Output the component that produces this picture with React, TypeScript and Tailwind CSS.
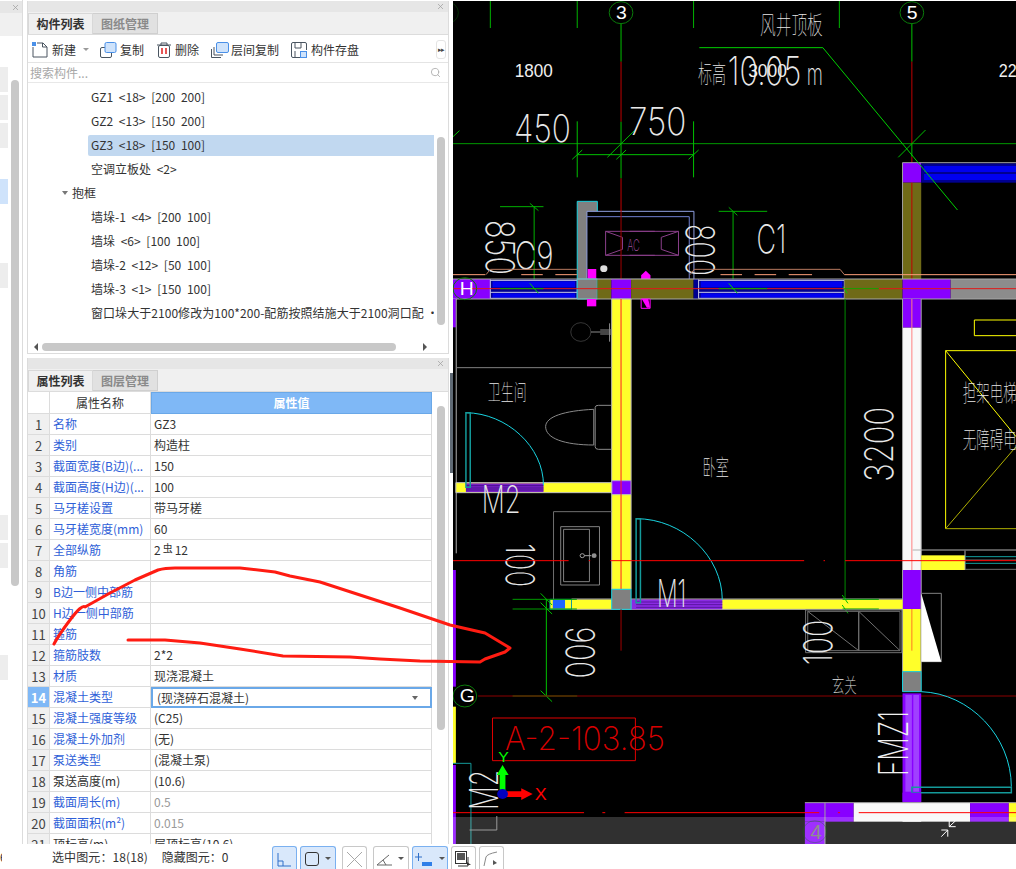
import React from "react";
import { Search, X } from "lucide-react";

const treeRows = [
  { text: "GZ1 <18> [200 200]" },
  { text: "GZ2 <13> [150 200]" },
  { text: "GZ3 <18> [150 100]", active: true },
  { text: "空调立板处 <2>" },
  { text: "抱框", group: true },
  { text: "墙垛-1 <4> [200 100]" },
  { text: "墙垛 <6> [100 100]" },
  { text: "墙垛-2 <12> [50 100]" },
  { text: "墙垛-3 <1> [150 100]" },
  { text: "窗口垛大于2100修改为100*200-配筋按照结施大于2100洞口配 ·", long: true },
];

const propRows: { name: string; value: React.ReactNode; plain?: boolean; dim?: boolean; active?: boolean }[] = [
  { name: "名称", value: "GZ3" },
  { name: "类别", value: "构造柱" },
  { name: "截面宽度(B边)(...", value: "150" },
  { name: "截面高度(H边)(...", value: "100" },
  { name: "马牙槎设置", value: "带马牙槎" },
  { name: "马牙槎宽度(mm)", value: "60" },
  { name: "全部纵筋", value: <>2<span className="text-[10px] relative -top-[2px] mx-[2px]">虫</span>12</> },
  { name: "角筋", value: "" },
  { name: "B边一侧中部筋", value: "" },
  { name: "H边一侧中部筋", value: "" },
  { name: "箍筋", value: "" },
  { name: "箍筋肢数", value: "2*2" },
  { name: "材质", value: "现浇混凝土" },
  { name: "混凝土类型", value: "(现浇碎石混凝土)", active: true },
  { name: "混凝土强度等级", value: "(C25)" },
  { name: "混凝土外加剂", value: "(无)" },
  { name: "泵送类型", value: "(混凝土泵)" },
  { name: "泵送高度(m)", value: "(10.6)", plain: true },
  { name: "截面周长(m)", value: "0.5", dim: true },
  { name: "截面面积(m²)", value: "0.015", dim: true },
  { name: "顶标高(m)", value: "层顶标高(10.6)", plain: true },
];

// canvas units: 1 page px = 2.785 x 3 units, strokes stay 1px
const Ln = ({ d, c, w = 1 }: { d: string; c: string; w?: number }) => (
  <path d={d} fill="none" stroke={c} strokeWidth={w} vectorEffect="non-scaling-stroke" />
);

const Box = ({ x, y, w, h, c, line }: { x: number; y: number; w: number; h: number; c: string; line?: string }) => (
  <rect x={x} y={y} width={w} height={h} fill={c} stroke={line ?? "none"} vectorEffect="non-scaling-stroke" />
);

const Txt = ({
  x, y, s, len, c = "#e8e8e8", rot, thin = true, children,
}: {
  x: number; y: number; s: number; len?: number; c?: string; rot?: number; thin?: boolean; children: React.ReactNode;
}) => (
  <text
    x={x}
    y={y}
    fontSize={s}
    fill={c}
    fontWeight={thin ? 150 : 400}
    fontFamily={thin ? "Inter, 'Noto Sans CJK SC', sans-serif" : "'Liberation Sans', sans-serif"}
    textLength={len}
    lengthAdjust="spacingAndGlyphs"
    transform={rot ? `rotate(${rot} ${x} ${y})` : undefined}
  >
    {children}
  </text>
);

const AxisMark = ({ x, y, label, c = "#fff", line = "#0a7a0a" }: { x: number; y: number; label: string; c?: string; line?: string }) => (
  <>
    <ellipse cx={x} cy={y} rx={33} ry={33} fill="none" stroke={line} vectorEffect="non-scaling-stroke" />
    <Txt x={x - 14} y={y + 19} s={54} c={c} thin={false}>{label}</Txt>
  </>
);

const WindowBand = ({ x, w }: { x: number; w: number }) => (
  <>
    <Box x={x} y={838} w={w} h={58} c="#000090" />
    <Box x={x + 6} y={844} w={w - 12} h={18} c="#0000f0" />
    <Box x={x + 6} y={880} w={w - 12} h={13} c="#0000f0" />
    <Ln d={`M${x} 841H${x + w}M${x} 877H${x + w}M${x} 895H${x + w}M${x} 838V896M${x + w} 838V896`} c="#c8c8e8" />
  </>
);

function CadCanvas() {
  return (
    <svg viewBox="0 3 1568 2529" preserveAspectRatio="none" className="block w-[563px] h-[843px] shrink-0 bg-black">
      {/* grid ticks and axis */}
      <Ln d="M104 0V84M346 0V84M670 0V84M1076 0V84" c="#00b400" />
      <Ln d="M0 431H1568" c="#009a00" />
      <Ln d="M468 70V185M468 365V535M1278 70V185M1278 430V470" c="#00c000" />
      <Ln d="M468 185V365M468 535V840M1278 185V430M1278 470V840" c="#c00000" />
      <Ln d="M346 464H670M346 364V532M670 364V532M332 478L360 450M430 472L505 392M455 478L482 450M656 478L684 450M1240 472L1316 390M0 410L18 392" c="#00c000" />
      <AxisMark x={468} y={38} label="3" />
      <AxisMark x={1278} y={38} label="5" />
      <ellipse cx={-18} cy={38} rx={33} ry={33} fill="none" stroke="#0a7a0a" />

      <Txt x={855} y={103} s={75} len={175}>风井顶板</Txt>
      <Txt x={172} y={232} s={54} len={106} c="#f0f0f0" thin={false}>1800</Txt>
      <Txt x={682} y={250} s={74} len={78}>标高</Txt>
      <Txt x={765} y={255} s={118} len={205}>10.05</Txt>
      <Txt x={985} y={255} s={90} len={45}>m</Txt>
      <Txt x={822} y={232} s={54} len={108} c="#f0f0f0" thin={false}>3000</Txt>
      <Txt x={1520} y={232} s={54} len={50} c="#f0f0f0" thin={false}>22</Txt>
      <Txt x={170} y={427} s={115} len={158}>450</Txt>
      <Txt x={490} y={405} s={115} len={160}>750</Txt>

      {/* top right wall */}
      <Box x={1252} y={488} w={52} h={60} c="#8800ff" />
      <Box x={1252} y={548} w={52} h={290} c="#6f6a17" />
      <Box x={1304} y={490} w={264} h={58} c="#000090" />
      <Box x={1312} y={498} w={256} h={18} c="#0000f0" />
      <Box x={1312} y={522} w={256} h={18} c="#0000f0" />
      <Ln d="M1252 838V488H1568" c="#a0a0a0" />
      <Ln d="M1278 548V838" c="#c00000" />
      <Ln d="M1030 143L1405 630M686 143H1030" c="#00d000" />

      {/* AC unit */}
      <Box x={346} y={604} w={56} h={234} c="#808080" line="#19d3e0" />
      <Box x={373} y={634} w={298} h={204} c="#000" line="#8f9fe0" />
      <Ln d="M373 650H658V838" c="#6f7fd0" />
      <Ln d="M425 694H628V766H425ZM425 694L472 712V748L425 766M628 694L580 712V748L628 766M492 694H562M492 766H562" c="#8a3f8a" />
      <Ln d="M468 630V838" c="#a00000" />
      <Txt x={485} y={752} s={48} len={35} c="#a050a0">AC</Txt>
      <circle cx={420} cy={806} r={10} fill="#ddd" />
      <Box x={375} y={807} w={24} h={32} c="#ff00ff" />
      <polygon points="524,826 537,812 550,826 550,897 524,897" fill="#ff00ff" />

      {/* dims near windows */}
      <Ln d="M131 620H252M226 620V866M214 610L238 632M740 634H875M780 634V866M768 622L792 646" c="#00b000" />
      <Txt x={92} y={660} s={110} len={165} rot={90}>850</Txt>
      <Txt x={172} y={808} s={115} len={108}>C9</Txt>
      <Txt x={648} y={672} s={110} len={156} rot={90}>800</Txt>
      <Txt x={845} y={760} s={118} len={83}>C1</Txt>
      <Ln d="M92 824L104 808H346M660 824L672 808H1078L1090 824" c="#b87a60" />
      <Ln d="M0 824H90M190 824H250M285 824H345M745 824H805M840 824H900M935 824H1000M1090 824H1568" c="#ff9f7a" />

      {/* main wall H */}
      <Box x={0} y={837} w={104} h={60} c="#8800ff" />
      <WindowBand x={104} w={242} />
      <Box x={346} y={837} w={56} h={60} c="#808080" line="#19d3e0" />
      <Box x={402} y={837} w={39} h={60} c="#6f6a17" />
      <Box x={441} y={837} w={55} h={60} c="#8800ff" />
      <Box x={496} y={837} w={174} h={60} c="#6f6a17" />
      <Box x={670} y={837} w={14} h={60} c="#000090" />
      <WindowBand x={684} w={406} />
      <Box x={1090} y={837} w={162} h={60} c="#6f6a17" />
      <Box x={1252} y={837} w={134} h={60} c="#8800ff" />
      <Box x={1386} y={837} w={182} h={60} c="#8c8c8c" />
      <Ln d="M0 897H1568M0 837H1568" c="#a8a8a8" />
      <Ln d="M0 866H1568" c="#e01818" />
      <Ln d="M131 866H252M740 866H875M1092 866H1186" c="#00b000" />
      <Ln d="M214 850L238 880M768 850L792 880M1086 860L1098 880" c="#00d000" />
      <AxisMark x={33} y={866} label="H" />
      <Box x={524} y={897} w={25} h={28} c="#000" line="#ff00ff" />
      <polygon points="526,897 544,897 549,923 540,923" fill="#ff00ff" />
      <Box x={373} y={897} w={26} h={22} c="#ff00ff" />

      {/* rooms */}
      <Box x={0} y={897} w={8} h={85} c="#8800ff" />
      <Ln d="M9 897V1660" c="#b0b0b0" />
      <Box x={442} y={897} w={54} h={545} c="#ffff2a" line="#b8b8b8" />
      <Box x={442} y={1442} w={54} h={42} c="#8800ff" line="#b8b8b8" />
      <Box x={442} y={1484} w={54} h={284} c="#ffff2a" line="#b8b8b8" />
      <Ln d="M468 897V1768" c="#ff2020" />
      <Ln d="M10 1103H441" c="#808080" />
      <Box x={8} y={1448} w={434} h={30} c="#ffff2a" line="#c0c0c0" />
      <Box x={36} y={1450} w={216} h={26} c="#7a20c8" />
      <Ln d="M36 1457H252M36 1464H252M36 1470H252" c="#4a1090" />
      <circle cx={356} cy={996} r={28} fill="none" stroke="#9a9a9a" />
      <Ln d="M384 996H441M410 990H441M410 1002H441M436 970V1025" c="#8a8a8a" />
      <Ln d="M392 1228C310 1232 258 1250 258 1280C258 1315 310 1335 392 1335ZM396 1222Q396 1216 405 1216H440M440 1348H405Q396 1348 396 1340V1222" c="#8a8a8a" />
      <Txt x={97} y={1200} s={66} len={108}>卫生间</Txt>
      <Ln d="M36 1238C150 1240 252 1340 252 1456" c="#19d3e0" />
      <path d="M36 1238H48V1462H36Z" fill="none" stroke="#149a9a" strokeWidth={1.5} vectorEffect="non-scaling-stroke" />
      <Txt x={80} y={1540} s={115} len={108}>M2</Txt>
      <Txt x={695} y={1425} s={66} len={73}>卧室</Txt>
      <Ln d="M1092 897V1800" c="#008a00" />
      <Txt x={1225} y={1445} s={110} len={225} rot={-90}>3200</Txt>

      {/* right column */}
      <Box x={1252} y={897} w={52} h={86} c="#8800ff" />
      <Box x={1252} y={983} w={52} h={727} c="#f8f8f8" />
      <Box x={1252} y={1710} w={52} h={117} c="#8800ff" />
      <Box x={1252} y={1827} w={52} h={188} c="#ffff2a" />
      <Ln d="M1278 897V1710" c="#ff8080" />
      <Ln d="M1278 1827V1952" c="#ff7a20" />
      <Ln d="M1252 897V2015M1304 897V2015" c="#a0a0a0" />
      <Box x={1452} y={960} w={130} h={47} c="none" line="#ffff00" />
      <Ln d="M1372 1052H1568M1372 1052V1586M1372 1052L1568 1310" c="#ffff00" />
      <Ln d="M1372 1586H1568M1372 1586L1568 1340" c="#b0b000" />
      <Txt x={1420} y={1202} s={68} len={150}>担架电梯</Txt>
      <Txt x={1420} y={1345} s={68} len={150}>无障碍电</Txt>
      <Box x={1304} y={1666} w={122} h={44} c="#ffff2a" />
      <Ln d="M1280 1650H1568M1426 1652V1710" c="#b0b0b0" />
      <Ln d="M1426 1670H1568M1426 1690H1568" c="#14a0a0" />
      <Ln d="M1426 1680H1568M1426 1708H1568" c="#707070" />

      {/* wash basin */}
      <Ln d="M280 1798V1535H441" c="#707070" />
      <Box x={300} y={1580} w={108} h={175} c="none" line="#808080" />
      <Box x={308} y={1588} w={72} h={157} c="none" line="#808080" />
      <circle cx={360} cy={1667} r={6} fill="none" stroke="#a0a0a0" vectorEffect="non-scaling-stroke" />
      <Ln d="M366 1667H385" c="#a0a0a0" />
      <circle cx={393} cy={1667} r={7} fill="#909090" />
      <Txt x={148} y={1630} s={110} len={132} rot={90}>100</Txt>

      {/* door M1 and lower walls */}
      <Box x={330} y={1798} w={922} h={30} c="#ffff2a" />
      <Ln d="M330 1797H1252M330 1828H1252" c="#b0b0b0" />
      <Box x={270} y={1798} w={60} h={30} c="#ffff2a" line="#149a9a" />
      <Box x={278} y={1800} w={34} h={26} c="#1e64ff" />
      <Box x={496} y={1798} w={254} h={30} c="#8a2be2" />
      <Ln d="M510 1806H750M510 1814H750M510 1822H750" c="#5a15a0" />
      <Box x={442} y={1768} w={54} h={60} c="#808080" line="#19d3e0" />
      <Ln d="M510 1556C640 1556 750 1670 750 1800" c="#19d3e0" />
      <path d="M510 1556H522V1808H510Z" fill="none" stroke="#149a9a" strokeWidth={1.5} vectorEffect="non-scaling-stroke" />
      <Txt x={568} y={1822} s={115} len={82}>M1</Txt>
      <Ln d="M166 1798H345M166 1827H345" c="#009a00" />
      <Ln d="M1085 1798H1186M1085 1827H1186" c="#009a00" />
      <Ln d="M260 1798V2088M244 1780L276 1815M244 1808L276 1842M244 2072L276 2105M1084 1785L1100 1810M1084 1815L1100 1840" c="#00c000" />
      <Ln d="M166 2088H346" c="#00a000" />
      <Ln d="M468 1828V1952" c="#a00000" />
      <Txt x={316} y={1880} s={110} len={155} rot={90}>900</Txt>
      <Ln d="M0 1682H322M378 1682H382M438 1682H978M1032 1682H1036M1092 1682H1568" c="#ff0000" />

      {/* closet */}
      <Ln d="M982 1830H1250V1958H982ZM988 1834H1130V1952H988ZM1130 1834H1245V1952H1130ZM988 1834L1130 1952M1130 1834L1245 1952" c="#707070" />
      <Txt x={1055} y={1995} s={110} len={135} rot={-90}>100</Txt>
      <Box x={1304} y={1780} w={56} h={205} c="#000" line="#808080" />
      <polygon points="1304,1780 1360,1985 1304,1985" fill="#fff" />
      <Box x={1252} y={2015} w={52} h={60} c="#808080" line="#19d3e0" />
      <Txt x={1055} y={2080} s={62} len={70}>玄关</Txt>

      {/* axis G */}
      <Ln d="M70 2088H1568" c="#8b0000" />
      <AxisMark x={33} y={2088} label="G" />
      <Box x={0} y={1710} w={8} h={350} c="#8800ff" />
      <Box x={0} y={2120} w={8} h={170} c="#ffff2a" />
      <Box x={0} y={2295} w={8} h={237} c="#8800ff" />

      <Box x={110} y={2154} w={398} h={128} c="none" line="#e00000" />
      <Txt x={145} y={2250} s={98} len={445} c="#d80000">A-2-103.85</Txt>

      {/* door FM */}
      <Box x={1252} y={2080} w={52} h={325} c="#8800ff" />
      <Box x={1260} y={2085} w={18} h={290} c="#a040ff" />
      <Box x={1282} y={2085} w={16} h={290} c="#a040ff" />
      <Ln d="M1304 2075C1440 2080 1555 2210 1555 2360" c="#19d3e0" />
      <path d="M1278 2362H1555V2378H1278Z" fill="none" stroke="#149a9a" strokeWidth={1.5} vectorEffect="non-scaling-stroke" />
      <Txt x={1268} y={2328} s={112} len={195} rot={-90} c="#f0f0f0">FMZ1</Txt>

      {/* bottom wall */}
      <Box x={980} y={2408} w={136} h={57} c="#8800ff" />
      <Box x={980} y={2465} w={56} h={67} c="#8800ff" />
      <Box x={1116} y={2408} w={324} h={57} c="#f8f8f8" />
      <Box x={1440} y={2408} w={108} h={57} c="#8800ff" />
      <Box x={1548} y={2408} w={20} h={57} c="#ffff2a" />
      <Box x={1252} y={2378} w={52} h={30} c="#8800ff" />
      <Box x={1252} y={2408} w={52} h={57} c="#f8f8f8" />
      <Ln d="M980 2408H1568M1036 2408V2532" c="#a0a0a0" />
      <Ln d="M0 2438H365M416 2438H424M478 2438H1020M1072 2438H1078M1130 2438H1568" c="#ff0000" />

      <Ln d="M0 2290H50V2532" c="#149a9a" />
      <Txt x={125} y={2430} s={110} len={120} rot={-90}>M2</Txt>

      {/* dimmed strip */}
      <rect x={0} y={2451} width={1568} height={81} fill="#fff" fillOpacity={0.19} />
      <Ln d="M122 2448V2490H46" c="#9a9a9a" />
      <ellipse cx={1008} cy={2495} rx={33} ry={33} fill="none" stroke="#0a7a0a" />
      <Txt x={995} y={2516} s={58} c="#8f8f8f" thin={false}>4</Txt>
      <Ln d="M1382 2462V2480H1400M1382 2480L1400 2462M1378 2510V2490H1360M1378 2490L1360 2510" c="#ffffff" />

      {/* origin marker */}
      <polygon points="130,2382 130,2325 122,2325 138,2295 155,2325 146,2325 146,2382" fill="#00ff00" />
      <polygon points="138,2374 190,2374 190,2365 222,2382 190,2400 190,2391 138,2391" fill="#ff0000" />
      <circle cx={138} cy={2382} r={15} fill="#0000c0" />
      <Txt x={126} y={2285} s={44} c="#00ff00" thin={false}>Y</Txt>
      <Txt x={228} y={2400} s={50} c="#ff0000" thin={false}>X</Txt>
    </svg>
  );
}

function LeftStrip() {
  return (
    <div className="w-[27px] shrink-0 flex">
      <div className="w-[23px] border-r border-[#dcdcdc] flex flex-col">
        <div className="h-[12px] mt-px bg-[#e6e6e6] flex items-center justify-end pr-[2px]">
          <X size={9} className="text-[#a0a0a0]" />
        </div>
        <div className="h-[23px] bg-[#f0f0f0]"></div>
        <div className="flex-1 bg-white flex">
          <div className="w-[8px] flex flex-col">
            <div className="h-[25px] mt-[31px] bg-[#ededed]"></div>
            <div className="h-[25px] mt-[3px] bg-[#ededed]"></div>
            <div className="h-[25px] mt-[3px] bg-[#ededed]"></div>
            <div className="h-[25px] mt-[31px] bg-[#cfe3fb]"></div>
            <div className="h-[25px] mt-[59px] bg-[#ededed]"></div>
            <div className="h-[25px] mt-[227px] bg-[#ededed]"></div>
            <div className="h-[25px] mt-[3px] bg-[#ededed]"></div>
            <div className="h-[25px] mt-[87px] bg-[#ededed]"></div>
          </div>
          <div className="w-[8px] ml-[3px] h-[506px] mt-[44px] rounded-full bg-[#c8c8c8]"></div>
        </div>
      </div>
    </div>
  );
}

function PanelHead() {
  return (
    <div className="h-[11px] bg-[#e6e6e6] flex items-center justify-end pr-[3px] shrink-0">
      <X size={9} className="text-[#a0a0a0]" />
    </div>
  );
}

function Tabs({ a, b }: { a: string; b: string }) {
  return (
    <div className="h-[23px] bg-[#f0f0f0] border-b border-[#dcdcdc] flex shrink-0 pt-px">
      <div className="w-[65px] flex items-center justify-center font-bold text-[#333] bg-[#f0f0f0] border border-[#d8d8d8] border-b-0">{a}</div>
      <div className="w-[65px] flex items-center justify-center font-bold text-[#8a8a8a] bg-[#e1e1e1] border border-[#cfcfcf] border-l-0">{b}</div>
    </div>
  );
}

const toolIcons = {
  add: (
    <svg width="16" height="16" viewBox="0 0 16 16" fill="none">
      <path d="M1 5V15H15V5L11 1H5" stroke="#4a5560" />
      <path d="M10.500 1V5H15" stroke="#4a5560" />
      <rect x="0" y="0" width="4" height="4" fill="#4a90e8" />
    </svg>
  ),
  copy: (
    <svg width="17" height="16" viewBox="0 0 17 16" fill="none">
      <rect x="0.500" y="5.500" width="11" height="10" rx="1.500" stroke="#4a5560" />
      <rect x="5" y="0.500" width="11" height="10" rx="1.500" fill="#cfe3fb" stroke="#4a90e8" />
    </svg>
  ),
  del: (
    <svg width="14" height="16" viewBox="0 0 14 16" fill="none">
      <path d="M0 3H14M4 3V1H10V3" stroke="#4a5560" />
      <rect x="1.500" y="3.500" width="11" height="12" rx="1.500" stroke="#4a5560" />
      <path d="M5 6V12M9 6V12" stroke="#e02020" strokeWidth="1.500" />
    </svg>
  ),
  floors: (
    <svg width="18" height="16" viewBox="0 0 18 16" fill="none">
      <path d="M0.500 7V15.500H10" stroke="#4a5560" />
      <path d="M3 5V13H12" stroke="#4a5560" />
      <rect x="5.500" y="0.500" width="12" height="10" rx="1.500" fill="#cfe3fb" stroke="#4a90e8" />
    </svg>
  ),
  save: (
    <svg width="16" height="16" viewBox="0 0 16 16" fill="none">
      <path d="M9 15.500H2Q0.500 15.500 0.500 14V2Q0.500 0.500 2 0.500H14Q15.500 0.500 15.500 2V8" stroke="#4a5560" />
      <path d="M4 1V6H10V1M4 15V9" stroke="#4a5560" />
      <rect x="9.500" y="9.500" width="6" height="6" fill="#cfe3fb" stroke="#4a90e8" />
    </svg>
  ),
};

function Toolbar() {
  return (
    <div className="h-[28px] bg-white flex items-center border-b border-[#e4e4e4] shrink-0 pl-[4px] pt-[2px]">
      <span className="w-[16px] mr-[4px] flex">{toolIcons.add}</span>
      <span>新建</span>
      <span className="w-0 h-0 ml-[7px] border-x-[3px] border-x-transparent border-t-[3px] border-t-[#9a9a9a]"></span>
      <span className="ml-[11px] mr-[3px] flex">{toolIcons.copy}</span>
      <span>复制</span>
      <span className="ml-[13px] mr-[4px] flex">{toolIcons.del}</span>
      <span>删除</span>
      <span className="ml-[12px] mr-[2px] flex">{toolIcons.floors}</span>
      <span>层间复制</span>
      <span className="ml-[12px] mr-[4px] flex">{toolIcons.save}</span>
      <span>构件存盘</span>
      <div className="ml-auto mr-[2px] w-[10px] h-[19px] rounded-[3px] border border-[#e4e4e4] flex items-center justify-center">
        <span className="text-[7px] tracking-[-1px] text-[#444] leading-none">▸▸</span>
      </div>
    </div>
  );
}

function ComponentPanel() {
  return (
    <div className="h-[353px] mt-px border border-t-0 border-[#dcdcdc] flex flex-col shrink-0 bg-white">
      <PanelHead />
      <Tabs a="构件列表" b="图纸管理" />
      <Toolbar />
      <div className="h-[20px] flex items-center justify-between pl-[2px] pr-[7px] border-b border-[#e8e8e8] shrink-0">
        <span className="text-[#a8a8a8]">搜索构件...</span>
        <Search size={11} className="text-[#b0b0b0]" />
      </div>
      <div className="flex-1 flex min-h-0">
        <div className="flex-1 pt-[2px] min-w-0">
          {treeRows.map((r) => (
            <div key={r.text} className="h-[24px] flex items-center">
              {r.group ? (
                <div className="flex items-center pl-[34px]">
                  <span className="w-0 h-0 mr-[4px] border-x-[3px] border-x-transparent border-t-[4px] border-t-[#777]"></span>
                  <span>{r.text}</span>
                </div>
              ) : (
                <div className={`ml-[60px] pl-[3px] h-[21px] flex-1 flex items-center whitespace-pre overflow-hidden rounded-l-[2px] ${r.long ? "tracking-[0.05px]" : "[word-spacing:3px]"} ${r.active ? "bg-[#c1d8f0]" : ""}`}>
                  {r.text}
                </div>
              )}
            </div>
          ))}
          <div className="flex items-center h-[12px] mt-[16px] text-[#444]">
            <span className="w-0 h-0 ml-[6px] border-y-[4px] border-y-transparent border-r-[4px] border-r-[#555]"></span>
            <div className="w-[354px] h-[8px] ml-[4px] rounded-full bg-[#c8c8c8]"></div>
            <span className="w-0 h-0 ml-[27px] border-y-[4px] border-y-transparent border-l-[4px] border-l-[#555]"></span>
          </div>
        </div>
        <div className="w-[14px] shrink-0 pl-[3px] pr-[3px]">
          <div className="h-[188px] mt-[54px] rounded-full bg-[#c8c8c8]"></div>
        </div>
      </div>
    </div>
  );
}

function PropPanel() {
  return (
    <div className="flex-1 mt-[4px] border-x border-[#dcdcdc] flex flex-col min-h-0 bg-white overflow-hidden">
      <PanelHead />
      <Tabs a="属性列表" b="图层管理" />
      <div className="flex-1 flex min-h-0">
        <div className="w-[404px] shrink-0">
          <div className="grid grid-cols-[22px_101px_281px] h-[22px]">
            <div className="border-r border-b border-[#dcdcdc]"></div>
            <div className="border-r border-b border-[#dcdcdc] flex items-center justify-center text-[#333]">属性名称</div>
            <div className="bg-[#7fb8f6] border border-[#6aa8e8] flex items-center justify-center text-white font-bold">属性值</div>
          </div>
          {propRows.map((r, i) => (
            <div key={r.name} className="grid grid-cols-[22px_101px_281px] h-[21px]">
              <div className={`border-r border-b border-[#dcdcdc] flex items-center justify-center text-[13px] ${r.active ? "bg-[#7fb8f6] text-white font-bold" : "bg-[#f0f0f0] text-[#444]"}`}>
                {i + 1}
              </div>
              <div className={`border-r border-b border-[#dcdcdc] flex items-center pl-[3px] whitespace-nowrap overflow-hidden ${r.plain ? "text-[#333]" : "text-[#2f5fd8]"}`}>
                {r.name}
              </div>
              {r.active ? (
                <div className="border-2 border-[#6aa8e8] flex items-center justify-between pl-[4px] pr-[12px]">
                  <span>{r.value}</span>
                  <span className="w-0 h-0 border-x-[3px] border-x-transparent border-t-[4px] border-t-[#666]"></span>
                </div>
              ) : (
                <div className={`border-r border-b border-[#dcdcdc] flex items-center pl-[3px] ${r.dim ? "text-[#999]" : "text-[#333]"}`}>
                  {r.value}
                </div>
              )}
            </div>
          ))}
        </div>
        <div className="flex-1 pl-[5px]">
          <div className="w-[8px] h-[324px] mt-[14px] rounded-full bg-[#c8c8c8]"></div>
        </div>
      </div>
    </div>
  );
}

function StatusBar() {
  const btn = "h-[23px] rounded-t-[3px] border border-b-0 flex items-center justify-center shrink-0";
  const caret = <span className="w-0 h-0 ml-[6px] border-x-[3px] border-x-transparent border-t-[3px] border-t-[#555]"></span>;
  return (
    <div className="h-[25px] bg-white flex items-end relative z-10">
      <span className="w-[2px] overflow-hidden self-center text-[#333]">6</span>
      <span className="ml-[50px] self-center tracking-[0.1px]">选中图元：18(18)</span>
      <span className="ml-[14px] self-center">隐藏图元：0</span>
      <div className="ml-[43px] flex items-end">
        <div className={`${btn} w-[25px] border-[#7ab0f0] bg-[#d9e8fb]`}>
          <svg width="14" height="14" viewBox="0 0 14 14" fill="none" className="mt-[3px]"><path d="M1 0V13H14M1 8H6V13" stroke="#2f6fc8" /></svg>
        </div>
        <div className={`${btn} w-[36px] ml-[3px] border-[#7ab0f0] bg-[#d9e8fb]`}>
          <span className="w-[14px] h-[14px] rounded-[3px] border border-[#333] mt-[2px]"></span>{caret}
        </div>
        <div className={`${btn} w-[25px] ml-[6px] border-[#c8c8c8]`}>
          <svg width="15" height="15" viewBox="0 0 15 15" className="mt-[3px]"><path d="M0 0L15 15M15 0L0 15" stroke="#a8a8a8" /></svg>
        </div>
        <div className={`${btn} w-[36px] ml-[6px] border-[#c8c8c8]`}>
          <svg width="15" height="13" viewBox="0 0 15 13" fill="none" className="mt-[3px]"><path d="M0 12H15M0 12L12 2M6 7L9 12" stroke="#666" /></svg>{caret}
        </div>
        <div className={`${btn} w-[36px] ml-[3px] border-[#7ab0f0] bg-[#d9e8fb]`}>
          <svg width="18" height="13" viewBox="0 0 18 13" fill="none" className="mt-[2px]"><path d="M0 4H7M3.500 0V8" stroke="#2f6fc8" /><rect x="7" y="9" width="10" height="4" fill="#2f7fe8" /></svg>{caret}
        </div>
        <div className={`${btn} w-[25px] ml-[3px] border-[#c8c8c8]`}>
          <svg width="16" height="16" viewBox="0 0 16 16" fill="none" className="mt-[2px]"><rect x="0.500" y="0.500" width="11" height="12" stroke="#333" /><rect x="2" y="2" width="8" height="7" fill="#555" /><path d="M3 15H13V6" stroke="#333" /><path d="M12 11L16 14H12Z" fill="#333" /></svg>
        </div>
        <div className={`${btn} w-[25px] ml-[3px] border-[#c8c8c8]`}>
          <svg width="16" height="16" viewBox="0 0 16 16" fill="none" className="mt-[2px]"><path d="M1 15L3 6Q4 3 14 1" stroke="#888" /><path d="M10 9L14 12L10 14Z" fill="#555" /></svg>
        </div>
      </div>
    </div>
  );
}

export default function App() {
  return (
    <div className="relative w-[1016px] h-[869px] overflow-hidden bg-white flex flex-col text-[12px] leading-none text-[#333] font-['Noto_Sans_CJK_SC',sans-serif]">
      <div className="h-[844px] flex">
        <LeftStrip />
        <div className="w-[422px] shrink-0 flex flex-col">
          <ComponentPanel />
          <PropPanel />
        </div>
        <div className="w-[4px] shrink-0 flex flex-col">
          <div className="w-[3px] h-[100px] mt-[373px] ml-[1px] bg-[#5f6a75]"></div>
        </div>
        <div className="mt-px">
          <CadCanvas />
        </div>
      </div>
      <StatusBar />
      {/* hand drawn mark on top of the screenshot */}
      <svg width="1016" height="869" className="absolute inset-0 pointer-events-none" fill="none">
        <path
          d="M54 644Q58 636 70 620T85 607L110 593L135 580L158 570Q165 568 175 568L240 568L275 572L290 576L320 582L360 595L400 608L450 625L485 633L500 642L510 648L505 652L485 659L480 662L420 661L380 659L350 657L283 656L240 649L200 643L165 640L128 640"
          stroke="#ff1c12"
          strokeWidth="3"
          strokeLinejoin="round"
          strokeLinecap="round"
        />
      </svg>
    </div>
  );
}
